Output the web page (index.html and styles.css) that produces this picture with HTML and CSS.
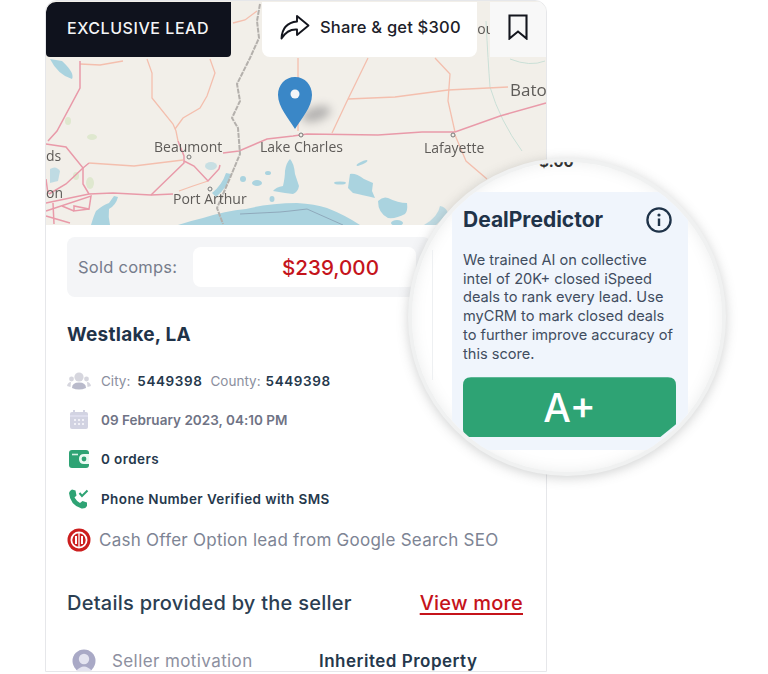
FILE: index.html
```html
<!DOCTYPE html>
<html lang="en">
<head>
<meta charset="utf-8">
<title>Exclusive lead</title>
<link rel="stylesheet" href="styles.css">
</head>
<body>
<main class="card">
  <div class="map-wrap">
    <svg class="map" viewBox="45 0 502 224" width="502" height="224" aria-label="Map">
      <rect x="45" y="0" width="502" height="224" fill="#f2efe9"/>
      <g fill="#dfe8cf">
        <ellipse cx="92" cy="136" rx="5" ry="3"/><ellipse cx="90" cy="182" rx="4" ry="6"/><ellipse cx="76" cy="175" rx="3" ry="4"/>
        <ellipse cx="68" cy="120" rx="3" ry="4"/><ellipse cx="460" cy="50" rx="3" ry="3"/>
      </g>
      <g fill="#aad3df">
        <path d="M50 58 Q58 74 72 78 Q75 72 62 60 Z"/>
        <path d="M350 173 Q356 172 364 178 L373 182 L372 190 L375 197 Q362 194 353 192 L348 187 Z"/>
        <path d="M378 200 Q383 195 388 197 Q398 202 407 202 Q408 210 405 213 Q396 218 388 217 Q378 212 378 200 Z"/>
        <path d="M290 158 Q294 162 295 173 L299 185 Q298 191 293 193 L285 192 L273 190 Q276 186 283 185 Q285 176 285 170 Q286 162 290 158 Z"/>
        <path d="M226 172 L231 173 Q228 186 216 196 L212 192 Q222 184 226 172 Z"/>
        <path d="M178 224 Q190 220 203 217 Q225 210 246 208 Q270 202 297 202 Q315 203 327 207 Q345 214 360 224 Z"/>
        <path d="M91 224 Q94 214 96 210 Q103 204 109 202 L114 195 L118 196 Q116 204 109 208 Q108 216 110 224 Z"/>
        <path d="M50 168 Q56 164 60 170 L58 180 L50 182 Z" opacity=".7"/>
        <path d="M424 224 Q438 216 440 205 Q446 206 448 212 L436 224 Z" opacity=".7"/>
        <ellipse cx="211" cy="165" rx="6" ry="4" opacity=".6"/>
        <ellipse cx="257" cy="182" rx="5" ry="3"/><ellipse cx="268" cy="172" rx="3" ry="2"/><ellipse cx="243" cy="178" rx="3" ry="3"/>
        <ellipse cx="272" cy="198" rx="2.5" ry="3"/><ellipse cx="397" cy="222" rx="6" ry="3"/><ellipse cx="340" cy="182" rx="6" ry="1.6"/>
        <ellipse cx="362" cy="162" rx="6" ry="1.5" transform="rotate(-25 362 162)"/>
      </g>
      <path d="M240 213 L280 211 L290 210 L307 208 L343 224" fill="none" stroke="#8fa9bb" stroke-width="1"/>
      <g fill="none" stroke="#b9d9cf" stroke-width="1" opacity=".7">
        <path d="M486 20 Q488 60 490 86 Q500 120 522 150"/>
        <path d="M510 58 Q530 66 545 60"/>
      </g>
      <g fill="none" stroke="#f4bfae" stroke-width="1.3">
        <path d="M233 22 L245 19 L257 10"/>
        <path d="M80 63 L100 64 L123 60"/>
        <path d="M147 58 L152 72 L152 97 L173 123 L176 130 L178 140"/>
        <path d="M210 58 L215 72 L207 95 L200 107 L183 117 L175 128"/>
        <path d="M298 57 L298 130"/>
        <path d="M368 57 L348 98 L332 132"/>
        <path d="M348 98 L395 96 L448 89 L508 86"/>
        <path d="M435 57 L450 73 L448 100 L455 131"/>
        <path d="M455 134 L466 160 L487 178"/>
        <path d="M89 162 L134 165 L183 159"/>
        <path d="M208 180 L193 185 L179 190"/>
      </g>
      <g fill="none" stroke="#e99aa9" stroke-width="1.5">
        <path d="M80 60 L80 87 L57 130 L48 140"/>
        <path d="M223 152 L239 150 L267 138 L293 135 L307 133 L378 134 L422 131 L455 131 L500 115 L546 102"/>
        <path d="M178 140 L184 155 L184 162 L151 194"/>
        <path d="M46 143 L66 146 L83 167 L89 162"/>
        <path d="M83 167 L66 183 L49 193"/>
        <path d="M83 167 L83 183 L89 193"/>
        <path d="M46 202 L89 193 L113 192 L151 194 L173 193"/>
        <path d="M184 160 L194 165 L208 180 L219 168 L220 164"/>
        <path d="M46 210 L91 195 L89 208 L74 205 L74 210 L89 208"/>
        <path d="M53 202 L54 223 M46 178 L48 193 M46 215 L70 222 M62 205 L74 210"/>
      </g>
      <path d="M260 3 L257 20 L259 37 L250 57 L237 83 L240 100 L232 117 L238 127 L240 153 L230 177 L217 207 L223 223" fill="none" stroke="#b4b0ac" stroke-width="2" stroke-dasharray="5 1"/>
      <g fill="#f2efe9" stroke="#777" stroke-width="1">
        <circle cx="189" cy="156" r="2"/><circle cx="301" cy="134" r="2"/><circle cx="453" cy="134" r="2"/><circle cx="210" cy="188" r="2"/>
      </g>
      <g class="place">
        <text x="154" y="151">Beaumont</text>
        <text x="260" y="151">Lake Charles</text>
        <text x="424" y="152">Lafayette</text>
        <text x="173" y="203">Port Arthur</text>
        <text x="510" y="95" class="place-big">Bato</text>
        <text x="46" y="160">ds</text>
        <text x="46" y="197">on</text>
        <text x="470" y="33">Lou</text>
      </g>
      <ellipse class="pin-shadow" cx="316" cy="113" rx="15" ry="7" transform="rotate(-18 316 113)"/>
      <path d="M295 76 C285 76 278 84 278 94 C278 106 289 118 295 128 C301 118 312 106 312 94 C312 84 305 76 295 76 Z" fill="#3a87c7"/>
      <circle cx="295" cy="93" r="4.5" fill="#f4f6f8"/>
    </svg>
    <div class="map-bar">
      <div class="exclusive">EXCLUSIVE LEAD</div>
      <div class="share">
        <svg class="share-icon" viewBox="0 0 30 26" width="30" height="26"><path d="M17 2 L28.5 11.5 L17 21 V15.5 C10 15 5.5 18 1.5 24.5 C2 15 7 8.5 17 7.5 Z" fill="none" stroke="#14161e" stroke-width="1.9" stroke-linejoin="round"/></svg>
        <span>Share &amp; get $300</span>
      </div>
      <div class="bookmark">
        <svg viewBox="0 0 20 26" width="20" height="26"><path d="M1.5 1.5 H18.5 V24.5 L10 17.5 L1.5 24.5 Z" fill="none" stroke="#14161e" stroke-width="2.1"/></svg>
      </div>
    </div>
  </div>

  <div class="body">
    <div class="comps">
      <span class="comps-label">Sold comps:</span>
      <div class="comps-value">$239,000</div>
    </div>
    <h1 class="city">Westlake, LA</h1>
    <ul class="facts">
      <li class="fact">
        <svg class="fact-icon" viewBox="0 0 24 20" width="24" height="20"><g fill="#d6d6de"><circle cx="12" cy="6" r="4.6"/><path d="M5 17 Q5 11.5 12 11.5 Q19 11.5 19 17 Q12 20 5 17 Z" fill="#b9bacb"/><circle cx="4.5" cy="8" r="2.4"/><circle cx="19.5" cy="8" r="2.4"/><path d="M0 15 Q1 11 4 11 L3.5 16 Z"/><path d="M24 15 Q23 11 20 11 L20.5 16 Z"/></g></svg>
        <span class="muted">City:</span><b class="num">5449398</b>
        <span class="muted county">County:</span><b class="num">5449398</b>
      </li>
      <li class="fact">
        <svg class="fact-icon" viewBox="0 0 24 20" width="24" height="20"><path d="M5 2 H19 Q21 2 21 4 V17 Q21 19 19 19 H5 Q3 19 3 17 V4 Q3 2 5 2 Z" fill="#d2d3e2"/><path d="M7 0 V3 M17 0 V3" stroke="#d2d3e2" stroke-width="2"/><path d="M3 6 H21" stroke="#eef" stroke-width=".8"/><g fill="#f1f1f7"><rect x="7" y="9" width="2" height="2"/><rect x="11" y="9" width="2" height="2"/><rect x="15" y="9" width="2" height="2"/><rect x="7" y="13" width="2" height="2"/><rect x="11" y="13" width="2" height="2"/><rect x="15" y="13" width="2" height="2"/></g></svg>
        <span class="date">09 February 2023, 04:10 PM</span>
      </li>
      <li class="fact">
        <svg class="fact-icon" viewBox="0 0 24 20" width="24" height="20"><path d="M5 1 H19 Q22 1 22 4 V16 Q22 19 19 19 H5 Q2 19 2 16 V4 Q2 1 5 1 Z" fill="#2ea374"/><path d="M5 5.5 H11" stroke="#d7f0e4" stroke-width="1.6"/><path d="M22 5 H17 Q12 5 12 10 Q12 15 17 15 H22 Z" fill="#eafaf3"/><circle cx="17" cy="10" r="2.4" fill="#2ea374"/></svg>
        <span class="strong">0 orders</span>
      </li>
      <li class="fact">
        <svg class="fact-icon" viewBox="0 0 24 20" width="24" height="20"><path d="M5 0.5 L8.5 1.5 L9.5 6.5 L7.5 8.5 Q9.5 12 13 14 L15.5 12 L20 13.5 L20 17 Q18.5 20 14.5 19.5 Q3 16 2 4 Q2.5 1.5 5 0.5 Z" fill="#2ea374"/><path d="M12.5 4 L15 7 L20.5 1.5" fill="none" stroke="#2ea374" stroke-width="2"/></svg>
        <span class="strong">Phone Number Verified with SMS</span>
      </li>
      <li class="fact fact-offer">
        <svg class="fact-icon" viewBox="0 0 24 24" width="24" height="24"><circle cx="12" cy="12" r="11.5" fill="#cc1f1f"/><circle cx="12" cy="12" r="7.6" fill="none" stroke="#fff" stroke-width="1.8"/><path d="M12 5 V19" stroke="#fff" stroke-width="1.3"/><path d="M9 8 V16 M15 8 V16" stroke="#fff" stroke-width="2"/></svg>
        <span class="offer">Cash Offer Option lead from Google Search SEO</span>
      </li>
    </ul>
    <div class="details-head">
      <h2 class="details-title">Details provided by the seller</h2>
      <a class="view-more" href="#">View more</a>
    </div>
    <div class="seller">
      <svg class="seller-icon" viewBox="0 0 24 24" width="24" height="24"><circle cx="12" cy="12" r="11.5" fill="#a9a9c6"/><circle cx="12" cy="10" r="5.2" fill="#e4e4f0"/><path d="M4 22 Q12 13 20 22 Z" fill="#e4e4f0"/></svg>
      <span class="seller-label">Seller motivation</span>
      <b class="seller-value">Inherited Property</b>
    </div>
  </div>
</main>

<aside class="lens">
  <div class="lens-clip">
    <span class="lens-frag">$.00</span>
    <div class="lens-rule"></div>
    <div class="predictor">
      <div class="predictor-head">
        <h3 class="predictor-title">DealPredictor</h3>
        <svg viewBox="0 0 26 26" width="26" height="26"><circle cx="13" cy="13" r="11.6" fill="none" stroke="#1f3349" stroke-width="2.3"/><circle cx="13" cy="8" r="1.6" fill="#1f3349"/><path d="M13 11.5 V19" stroke="#1f3349" stroke-width="2.4"/></svg>
      </div>
      <p class="predictor-text">We trained AI on collective<br>intel of 20K+ closed iSpeed<br>deals to rank every lead. Use<br>myCRM to mark closed deals<br>to further improve accuracy of<br>this score.</p>
      <div class="grade">A+</div>
    </div>
  </div>
</aside>
</body>
</html>
```
FILE: styles.css
```css
* { box-sizing: border-box; }
html, body { margin: 0; padding: 0; background: #fff; }
body {
  width: 768px;
  height: 674px;
  overflow: hidden;
  position: relative;
  font-family: Inter, "Noto Sans", "Liberation Sans", sans-serif;
  color: #1f3349;
}
.card {
  width: 502px;
  height: 672px;
  margin-left: 45px;
  border: 1px solid #e6e7ea;
  border-radius: 12px 12px 0 0;
  overflow: hidden;
  background: #fff;
}
.map-wrap { position: relative; height: 223px; margin: 0 -1px; }
.map { display: block; filter: blur(.5px); }
.place { font: 14px "Open Sans", sans-serif; fill: #5e5b58; }
.place-big { font-size: 17px; }
.pin-shadow { fill: #5a5a60; opacity: .42; filter: blur(5px); }
.map-bar {
  position: absolute;
  top: 1px; left: 1px; right: 0;
  height: 55px;
  display: flex;
  align-items: stretch;
}
.exclusive {
  width: 185px;
  background: #0f121d;
  color: #f4f5f7;
  font-size: 16px;
  font-weight: 500;
  letter-spacing: .55px;
  border-radius: 10px 0 4px 4px;
  display: flex;
  align-items: center;
  padding: 0 0 4px 21px;
}
.share {
  margin-left: 31px;
  width: 215px;
  background: #fff;
  border-radius: 0 0 8px 8px;
  display: flex;
  align-items: center;
  gap: 10px;
  padding: 0 0 5px 18px;
  font-size: 16.5px;
  font-weight: 500;
  letter-spacing: .2px;
  color: #1c2029;
}
.bookmark {
  margin-left: 13px;
  flex: 1;
  background: #f8f8f8;
  display: flex;
  align-items: center;
  justify-content: center;
  padding: 0 2px 5px 0;
}
.body { padding: 13px 0 0 21px; }
.comps {
  width: 364px;
  height: 60px;
  background: #f4f5f7;
  border-radius: 8px;
  display: flex;
  align-items: center;
  padding-left: 11px;
}
.comps-label { width: 115px; font-size: 16.5px; letter-spacing: .25px; color: #767c8c; white-space: nowrap; }
.comps-value {
  width: 223px;
  height: 40px;
  background: #fff;
  border-radius: 8px;
  display: flex;
  align-items: center;
  justify-content: center;
  padding-left: 52px;
  font-size: 20.6px;
  font-weight: 500;
  color: #c5141b;
}
.city { margin: 26px 0 0; font-size: 19px; line-height: 24px; font-weight: 700; letter-spacing: .25px; color: #1f3349; }
.facts { list-style: none; margin: 14px 0 0; padding: 0; display: flex; flex-direction: column; }
.fact { height: 39.3px; display: flex; align-items: center; font-size: 13.5px; white-space: nowrap; }
.fact-icon { width: 24px; margin-right: 10px; flex: none; }
.muted { color: #8b8f9e; margin-right: 7px; }
.county { margin-left: 8px; margin-right: 5px; }
.num { font-weight: 600; color: #25384c; letter-spacing: .6px; }
.date { font-weight: 600; color: #6f7385; letter-spacing: .02px; }
.strong { font-weight: 600; color: #25384c; letter-spacing: .4px; }
.fact-offer { margin-top: 2px; }
.fact-offer .fact-icon { margin-right: 8px; }
.offer { font-size: 17px; letter-spacing: .25px; color: #7d8494; white-space: nowrap; }
.details-head {
  width: 456px;
  margin-top: 30px;
  display: flex;
  align-items: center;
  justify-content: space-between;
}
.details-title { margin: 0; font-size: 20px; line-height: 28px; font-weight: 500; letter-spacing: .25px; color: #2b3e52; }
.view-more { font-size: 20px; font-weight: 500; letter-spacing: .2px; color: #c5141b; text-decoration: underline; text-underline-offset: 3px; }
.seller { display: flex; align-items: center; margin-top: 32px; padding-left: 5px; }
.seller-icon { flex: none; margin-right: 16px; }
.seller-label { width: 207px; font-size: 17px; letter-spacing: .4px; color: #8d90a0; }
.seller-value { font-size: 17px; font-weight: 600; letter-spacing: .5px; color: #25384c; }

.lens {
  position: absolute;
  left: 408px;
  top: 158px;
  width: 318px;
  height: 318px;
  border-radius: 50%;
  background: #fff;
  border: 4px solid #f0f1f1;
  box-shadow: 0 2px 12px rgba(90, 95, 95, .28), inset 0 0 14px rgba(120, 125, 125, .14);
}
.lens-clip {
  position: relative;
  width: 100%;
  height: 100%;
  border-radius: 50%;
  overflow: hidden;
}
.lens-frag {
  position: absolute;
  left: 127px;
  top: -10px;
  font-size: 15px;
  font-weight: 700;
  color: #333;
}
.lens-rule { position: absolute; left: 20px; top: 88px; width: 1px; height: 130px; background: #eef0f2; }
.predictor {
  position: absolute;
  left: 40px;
  top: 30px;
  width: 236px;
  height: 258px;
  background: #f0f5fc;
  padding: 15px 11px 0;
}
.predictor-head { display: flex; align-items: center; justify-content: space-between; width: 209px; }
.predictor-title { margin: 0; font-size: 21px; line-height: 26px; font-weight: 700; color: #1f3349; }
.predictor-text { margin: 18px 0 0; font-size: 14.6px; line-height: 18.7px; color: #414d60; white-space: nowrap; }
.grade {
  width: 213px;
  height: 60px;
  margin-top: 14px;
  background: #2ea374;
  clip-path: path("M8 0 H205 Q213 0 213 8 V47 L197 60 H8 Q0 60 0 52 V8 Q0 0 8 0 Z");
  color: #fff;
  font-size: 39px;
  font-weight: 500;
  display: flex;
  align-items: center;
  justify-content: center;
}
```
